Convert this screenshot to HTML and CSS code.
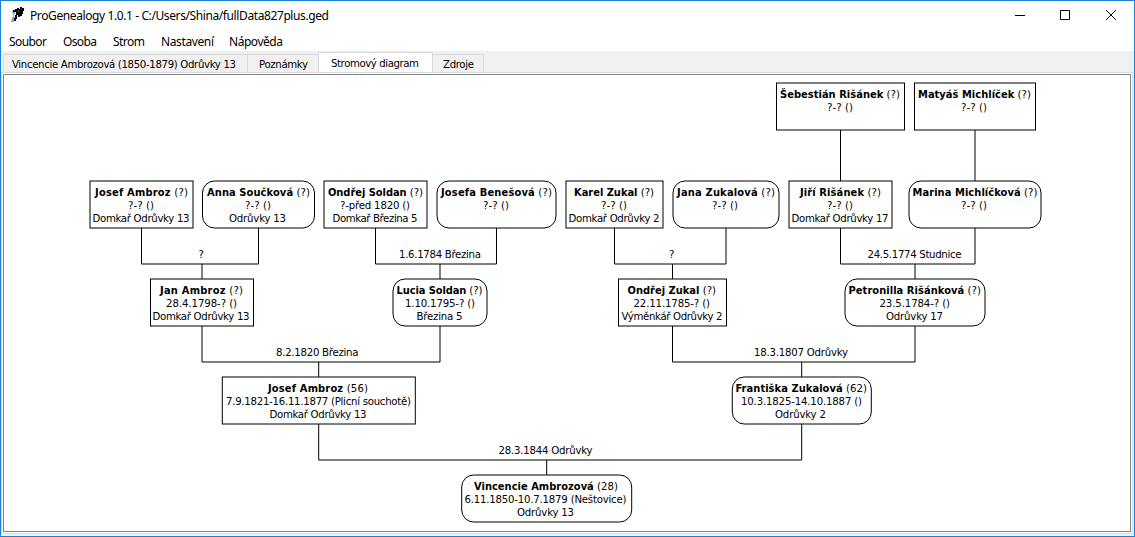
FILE: index.html
```html
<!DOCTYPE html>
<html lang="cs">
<head>
<meta charset="utf-8">
<title>ProGenealogy</title>
<link rel="stylesheet" href="styles.css">
</head>
<body>
<div class="window">
  <header class="titlebar">
    <svg class="app-icon" width="14" height="16" viewBox="0 0 14 16">
      <path class="icon-shade" d="M1 4H3V3H4V7H3V10H4V13H3V15H0V13H1V10H2V6H1Z"/>
      <path class="icon-ink" d="M2 3H4V2H6V1H8V2H9V0H11V1H13V4H12V7H11V9H9V10H7V8H6V12H5V14H3V11H4V8H5V5H2Z"/>
      <path class="icon-gap" d="M7 3H8V5H7Z"/>
    </svg>
    <svg class="caption" width="320" height="30"><text x="0" y="19" textLength="299">ProGenealogy 1.0.1 - C:/Users/Shina/fullData827plus.ged</text></svg>
    <div class="controls">
      <svg width="46" height="29"><path d="M15 14.5H25"/></svg>
      <svg width="46" height="29"><path d="M14.5 9.5H23.5V18.5H14.5Z"/></svg>
      <svg width="46" height="29"><path d="M14.2 9.2L23.8 18.8M23.8 9.2L14.2 18.8"/></svg>
    </div>
  </header>
  <nav class="menu">
    <svg width="300" height="20">
      <text x="8" y="15" textLength="38">Soubor</text>
      <text x="62" y="15" textLength="34">Osoba</text>
      <text x="112" y="15" textLength="32">Strom</text>
      <text x="160" y="15" textLength="53">Nastavení</text>
      <text x="228" y="15" textLength="54">Nápověda</text>
    </svg>
  </nav>
  <div class="tabs">
    <div class="tab tab-person"><svg width="226" height="17"><text x="0" y="13" textLength="224">Vincencie Ambrozová (1850-1879) Odrůvky 13</text></svg></div>
    <div class="tab tab-notes"><svg width="50" height="17"><text x="0" y="13" textLength="49">Poznámky</text></svg></div>
    <div class="tab tab-active"><svg width="88" height="17"><text x="0" y="14" textLength="88">Stromový diagram</text></svg></div>
    <div class="tab tab-sources"><svg width="32" height="17"><text x="0" y="13" textLength="31">Zdroje</text></svg></div>
  </div>
  <main class="pane">
    <svg class="tree" viewBox="4 75 1126 456">
      <g class="links">
        <path d="M840.5 130V181M975 130V181"/>
        <path d="M141.5 228V264H258.5V228M202 264V279"/>
        <path d="M375.5 228V264H496.5V228M440 264V279"/>
        <path d="M614.5 228V264H726V228M672.5 264V279"/>
        <path d="M840.5 228V264H975V228M915 264V279"/>
        <path d="M202 326V362H440V326M318.7 362V377"/>
        <path d="M672.5 326V362H915V326M801.7 362V377"/>
        <path d="M318.7 424V460H801.7V424M546.7 460V475"/>
      </g>
      <g class="boxes">
        <rect x="776.5" y="83" width="128" height="47"/>
        <rect x="914.5" y="83" width="121" height="47"/>
        <rect x="90" y="181" width="103" height="47"/>
        <rect x="202.5" y="181" width="112" height="47" rx="12"/>
        <rect x="324" y="181" width="103" height="47"/>
        <rect x="437" y="181" width="119" height="47" rx="12"/>
        <rect x="566" y="181" width="97" height="47"/>
        <rect x="673" y="181" width="106" height="47" rx="12"/>
        <rect x="789" y="181" width="103" height="47"/>
        <rect x="909" y="181" width="132" height="47" rx="12"/>
        <rect x="150.5" y="279" width="103" height="47"/>
        <rect x="393" y="279" width="94" height="47" rx="12"/>
        <rect x="618.5" y="279" width="108" height="47"/>
        <rect x="845" y="279" width="140" height="47" rx="12"/>
        <rect x="222.3" y="377" width="193" height="47"/>
        <rect x="732.3" y="377" width="139" height="47" rx="12"/>
        <rect x="461.7" y="475" width="170" height="47" rx="12"/>
      </g>
      <g class="people">
        <text x="780" y="98" textLength="120"><tspan class="name">Šebestián Rišánek</tspan> (?)</text>
        <text x="827" y="111" textLength="26">?-? ()</text>
        <text x="918" y="98" textLength="113"><tspan class="name">Matyáš Michlíček</tspan> (?)</text>
        <text x="961" y="111" textLength="26">?-? ()</text>

        <text x="95" y="196" textLength="93"><tspan class="name">Josef Ambroz</tspan> (?)</text>
        <text x="128" y="209" textLength="26">?-? ()</text>
        <text x="92.5" y="222" textLength="97">Domkař Odrůvky 13</text>
        <text x="207" y="196" textLength="103"><tspan class="name">Anna Součková</tspan> (?)</text>
        <text x="245" y="209" textLength="26">?-? ()</text>
        <text x="229" y="222" textLength="57">Odrůvky 13</text>
        <text x="328" y="196" textLength="95"><tspan class="name">Ondřej Soldan</tspan> (?)</text>
        <text x="340" y="209" textLength="70">?-před 1820 ()</text>
        <text x="332.5" y="222" textLength="85">Domkař Březina 5</text>
        <text x="441" y="196" textLength="111"><tspan class="name">Josefa Benešová</tspan> (?)</text>
        <text x="483" y="209" textLength="26">?-? ()</text>
        <text x="574" y="196" textLength="80"><tspan class="name">Karel Zukal</tspan> (?)</text>
        <text x="601" y="209" textLength="26">?-? ()</text>
        <text x="568.5" y="222" textLength="91">Domkař Odrůvky 2</text>
        <text x="677" y="196" textLength="98"><tspan class="name">Jana Zukalová</tspan> (?)</text>
        <text x="712" y="209" textLength="26">?-? ()</text>
        <text x="800" y="196" textLength="81"><tspan class="name">Jiří Rišánek</tspan> (?)</text>
        <text x="827" y="209" textLength="26">?-? ()</text>
        <text x="791.5" y="222" textLength="97">Domkař Odrůvky 17</text>
        <text x="912.5" y="196" textLength="125"><tspan class="name">Marina Michlíčková</tspan> (?)</text>
        <text x="961" y="209" textLength="26">?-? ()</text>

        <text x="160" y="294" textLength="83"><tspan class="name">Jan Ambroz</tspan> (?)</text>
        <text x="166" y="307" textLength="71">28.4.1798-? ()</text>
        <text x="152.5" y="320" textLength="97">Domkař Odrůvky 13</text>
        <text x="396.5" y="294" textLength="86"><tspan class="name">Lucia Soldan</tspan> (?)</text>
        <text x="405" y="307" textLength="70">1.10.1795-? ()</text>
        <text x="416.5" y="320" textLength="46">Březina 5</text>
        <text x="627.5" y="294" textLength="88.5"><tspan class="name">Ondřej Zukal</tspan> (?)</text>
        <text x="633.5" y="307" textLength="76.5">22.11.1785-? ()</text>
        <text x="621.5" y="320" textLength="101">Výměnkář Odrůvky 2</text>
        <text x="848.5" y="294" textLength="132.5"><tspan class="name">Petronilla Rišánková</tspan> (?)</text>
        <text x="879.5" y="307" textLength="70.5">23.5.1784-? ()</text>
        <text x="886" y="320" textLength="57">Odrůvky 17</text>

        <text x="268" y="392" textLength="100"><tspan class="name">Josef Ambroz</tspan> (56)</text>
        <text x="226" y="405" textLength="185">7.9.1821-16.11.1877 (Plicní souchotě)</text>
        <text x="269.5" y="418" textLength="97">Domkař Odrůvky 13</text>
        <text x="735.5" y="392" textLength="131.5"><tspan class="name">Františka Zukalová</tspan> (62)</text>
        <text x="741" y="405" textLength="121">10.3.1825-14.10.1887 ()</text>
        <text x="775" y="418" textLength="51">Odrůvky 2</text>

        <text x="474" y="490" textLength="144"><tspan class="name">Vincencie Ambrozová</tspan> (28)</text>
        <text x="464.5" y="503" textLength="162">6.11.1850-10.7.1879 (Neštovice)</text>
        <text x="517" y="516" textLength="57">Odrůvky 13</text>
      </g>
      <g class="marriages">
        <text x="198.5" y="258">?</text>
        <text x="399" y="258" textLength="82">1.6.1784 Březina</text>
        <text x="669" y="258">?</text>
        <text x="867.5" y="258" textLength="94">24.5.1774 Studnice</text>
        <text x="276" y="356" textLength="82.5">8.2.1820 Březina</text>
        <text x="754" y="356" textLength="94">18.3.1807 Odrůvky</text>
        <text x="498.5" y="454" textLength="94">28.3.1844 Odrůvky</text>
      </g>
    </svg>
  </main>
</div>
</body>
</html>
```
FILE: styles.css
```css
body {
  margin: 0;
  background: #fff;
}

svg {
  display: block;
}

.window {
  box-sizing: border-box;
  width: 1135px;
  height: 537px;
  border: 1px solid #1883d7;
  background: #f0f0f0;
  display: flex;
  flex-direction: column;
  overflow: hidden;
}

.titlebar {
  height: 30px;
  background: #fff;
  display: flex;
  align-items: flex-start;
}

.app-icon {
  margin: 6px 5px 0 10px;
  shape-rendering: crispEdges;
}

.icon-shade { fill: #8fa9dc; }
.icon-ink { fill: #05060c; }
.icon-gap { fill: #4a5268; }

.caption {
  font: 12px "Noto Sans", "Open Sans", sans-serif;
}

.controls {
  display: flex;
  margin-left: auto;
  margin-right: -4px;
}

.controls path {
  fill: none;
  stroke: #000;
  stroke-width: 1;
}

.menu {
  height: 20px;
  background: #fff;
  font: 12px "Noto Sans", "Open Sans", sans-serif;
}

.tabs {
  height: 22px;
  padding-left: 2px;
  display: flex;
  align-items: flex-end;
  font: 11.3px "DejaVu Sans Condensed", "DejaVu Sans", sans-serif;
  font-stretch: condensed;
}

.tab {
  box-sizing: border-box;
  height: 19px;
  border: 1px solid #d9d9d9;
  border-left-width: 0;
}

.tab-person {
  width: 245px;
  border-left-width: 1px;
  padding-left: 8px;
}

.tab-notes {
  width: 70px;
  border-right-width: 0;
  padding-left: 11px;
}

.tab-active {
  width: 115px;
  height: 21px;
  border-left-width: 1px;
  border-bottom-width: 0;
  background: #fff;
  padding-left: 12px;
}

.tab-sources {
  width: 51px;
  padding-left: 10px;
}

.pane {
  box-sizing: border-box;
  width: 1128px;
  height: 458px;
  margin: 1px 0 0 2px;
  border: 1px solid #828790;
  background: #fff;
  box-shadow: 0 0 0 1px #fff, 0 0 0 2px #dcdcdc;
}

.tree {
  width: 1126px;
  height: 456px;
  font: 11.3px "DejaVu Sans Condensed", "DejaVu Sans", sans-serif;
  font-stretch: condensed;
}

.links path,
.boxes rect {
  fill: none;
  stroke: #000;
  stroke-width: 1;
}

.name {
  font-size: 11px;
  font-weight: bold;
}
```
